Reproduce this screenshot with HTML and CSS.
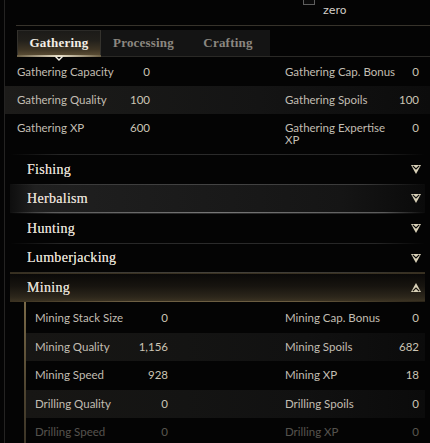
FILE: index.html
```html
<!DOCTYPE html>
<html>
<head>
<meta charset="utf-8">
<link rel="stylesheet" href="styles.css">
</head>
<body>
<div class="panel">
  <div class="top">
    <div class="opt"><span class="check"></span><span class="opt-label">zero</span></div>
  </div>
  <div class="tabs">
    <div class="tab active">Gathering<svg class="tab-caret" width="8" height="5" viewBox="0 0 8 5"><polyline points="0.5,0.5 4,4 7.5,0.5" fill="none" stroke="#f2eee4" stroke-width="1.4"/></svg></div>
    <div class="tab">Processing</div>
    <div class="tab">Crafting</div>
  </div>
  <div class="stats">
    <div class="row">
      <div class="cell"><span class="lbl">Gathering Capacity</span><span class="val">0</span></div>
      <div class="cell"><span class="lbl">Gathering Cap. Bonus</span><span class="val">0</span></div>
    </div>
    <div class="row alt">
      <div class="cell"><span class="lbl">Gathering Quality</span><span class="val">100</span></div>
      <div class="cell"><span class="lbl">Gathering Spoils</span><span class="val">100</span></div>
    </div>
    <div class="row last">
      <div class="cell"><span class="lbl">Gathering XP</span><span class="val">600</span></div>
      <div class="cell"><span class="lbl wrap">Gathering Expertise XP</span><span class="val">0</span></div>
    </div>
  </div>
  <div class="acc">
    <div class="head"><span>Fishing</span><svg class="chev" width="10" height="9" viewBox="0 0 10 9"><polygon points="0,0 10,0 5,9" fill="#d9d1b8"/><polyline points="1.8,0.9 5,4 8.2,0.9" fill="none" stroke="#050505" stroke-width="1.2"/></svg></div>
    <div class="head hl"><span>Herbalism</span><svg class="chev" width="10" height="9" viewBox="0 0 10 9"><polygon points="0,0 10,0 5,9" fill="#d9d1b8"/><polyline points="1.8,0.9 5,4 8.2,0.9" fill="none" stroke="#121212" stroke-width="1.2"/></svg></div>
    <div class="head"><span>Hunting</span><svg class="chev" width="10" height="9" viewBox="0 0 10 9"><polygon points="0,0 10,0 5,9" fill="#d9d1b8"/><polyline points="1.8,0.9 5,4 8.2,0.9" fill="none" stroke="#050505" stroke-width="1.2"/></svg></div>
    <div class="head"><span>Lumberjacking</span><svg class="chev" width="10" height="9" viewBox="0 0 10 9"><polygon points="0,0 10,0 5,9" fill="#d9d1b8"/><polyline points="1.8,0.9 5,4 8.2,0.9" fill="none" stroke="#050505" stroke-width="1.2"/></svg></div>
    <div class="head open"><span>Mining</span><svg class="chev" width="10" height="9" viewBox="0 0 10 9"><polygon points="0,9 10,9 5,0" fill="#d9d1b8"/><polyline points="1.8,8.1 5,5 8.2,8.1" fill="none" stroke="#1a1610" stroke-width="1.2"/></svg></div>
    <div class="body">
      <div class="mrow">
        <div class="cell"><span class="lbl">Mining Stack Size</span><span class="val">0</span></div>
        <div class="cell"><span class="lbl">Mining Cap. Bonus</span><span class="val">0</span></div>
      </div>
      <div class="mrow alt">
        <div class="cell"><span class="lbl">Mining Quality</span><span class="val">1,156</span></div>
        <div class="cell"><span class="lbl">Mining Spoils</span><span class="val">682</span></div>
      </div>
      <div class="mrow">
        <div class="cell"><span class="lbl">Mining Speed</span><span class="val">928</span></div>
        <div class="cell"><span class="lbl">Mining XP</span><span class="val">18</span></div>
      </div>
      <div class="mrow alt">
        <div class="cell"><span class="lbl">Drilling Quality</span><span class="val">0</span></div>
        <div class="cell"><span class="lbl">Drilling Spoils</span><span class="val">0</span></div>
      </div>
      <div class="mrow faded">
        <div class="cell"><span class="lbl">Drilling Speed</span><span class="val">0</span></div>
        <div class="cell"><span class="lbl">Drilling XP</span><span class="val">0</span></div>
      </div>
    </div>
  </div>
</div>
</body>
</html>
```

FILE: styles.css
```css
html, body {
  margin: 0;
  padding: 0;
  background: #040404;
  height: 100%;
  overflow: hidden;
}

.panel {
  margin-left: 4px;
  border-left: 1px solid #242322;
  min-height: 100%;
  font-family: "Lato", "Open Sans", sans-serif;
  color: #c4bfb4;
}

/* top option */
.top {
  height: 25px;
  margin-left: 11px;
  border-bottom: 1px solid #37332b;
}

.opt {
  display: flex;
  flex-direction: column;
  margin-left: 287px;
}

.check {
  display: block;
  width: 10px;
  height: 10px;
  margin-top: -7px;
  border: 1px solid #5e5e5e;
  background: #0a0a0a;
}

.opt-label {
  margin-left: 20px;
  margin-top: -1px;
  font: 11px/13px "DejaVu Sans", sans-serif;
  color: #d4d0c8;
}

/* tabs */
.tabs {
  display: flex;
  margin-top: 4px;
  margin-left: 12px;
  height: 26px;
  border-bottom: 1px solid #2a2926;
}

.tab {
  position: relative;
  width: 85px;
  display: flex;
  align-items: center;
  justify-content: center;
  background: #141414;
  color: #8b8780;
  font: bold 13px "Liberation Serif", serif;
  letter-spacing: 0.2px;
}

.tab:nth-child(3) { width: 84px; }

.tab.active {
  width: 84px;
  color: #f3efe6;
  background: linear-gradient(180deg, #1b1a18 0%, #22201b 40%, #3d3424 75%, #5e5036 100%);
  box-shadow: inset 1px 0 0 #34322d, inset -1px 0 0 #34322d, inset 0 1px 0 #2b2a27;
}

.tab.active::after {
  content: "";
  position: absolute;
  left: 0;
  right: 0;
  bottom: -1px;
  height: 2px;
  background: linear-gradient(to right, #6c5f44, #e8dfc8 50%, #6c5f44);
}

.tab-caret {
  position: absolute;
  left: 38px;
  bottom: -5px;
  z-index: 2;
}

/* stats */
.stats {
  margin-top: 1px;
}

.row {
  display: grid;
  grid-template-columns: 133px 134px;
  column-gap: 135px;
  padding: 8px 0 8px 12px;
  font-size: 11.5px;
  line-height: 12px;
}

.row.alt {
  background: linear-gradient(to right, #1d1c1a 0%, #181817 30%, #141414 60%, #0c0c0c 100%);
}

.row.last {
  padding-bottom: 8px;
}

.cell {
  display: flex;
  justify-content: space-between;
  align-items: flex-start;
}

.lbl {
  color: #c2bdb2;
}

.lbl.wrap {
  max-width: 108px;
}

.val {
  color: #cbc4b4;
  text-align: right;
}

/* accordion */
.acc {
  margin: 0 5px;
}

.head {
  height: 27.5px;
  border-top: 2px solid transparent;
  display: flex;
  align-items: center;
  justify-content: space-between;
  padding: 0 4px 0 17px;
  font: 14px "Liberation Serif", serif;
  color: #e0dbd0;
  letter-spacing: 0.3px;
  text-shadow: 0 0 0.6px #e0dbd0;
  background:
    linear-gradient(to right, transparent, #262626 12%, #2b2b2b 50%, #262626 88%, transparent) top / 100% 1px no-repeat border-box;
}

.head.hl {
  background:
    linear-gradient(to right, transparent, #3a3a3a 15%, #444 50%, #3a3a3a 85%, transparent) top / 100% 1px no-repeat border-box,
    linear-gradient(to right, transparent, #5c5c5c 10%, #777 50%, #5c5c5c 90%, transparent) bottom / 100% 1px no-repeat border-box,
    linear-gradient(to right, #0e0e0e 0%, #202020 6%, #1b1b1b 40%, #151515 80%, #0a0a0a 100%);
  border-bottom: 1px solid transparent;
  height: 26.5px;
}

.head.open {
  background:
    linear-gradient(to right, transparent, #3a3833 15%, #45423b 50%, #3a3833 85%, transparent) top / 100% 1px no-repeat border-box,
    linear-gradient(to right, #3a3120, #6e6044 30%, #6a5c40 70%, #2a2418) bottom / 100% 1px no-repeat border-box,
    linear-gradient(180deg, #0a0908 0%, #17140f 45%, #2c261b 85%, #3a3222 100%);
  border-bottom: 1px solid transparent;
  height: 27px;
}

.head svg {
  display: block;
}

/* mining body */
.body {
  margin-left: 14px;
  border-left: 2px solid #5a4f38;
  border-image: linear-gradient(180deg, #7a6a48, #4e4430 60%, #3a3326) 1;
  padding-top: 2px;
}

.mrow {
  display: grid;
  grid-template-columns: 133px 134px;
  column-gap: 117px;
  height: 28.5px;
  align-items: center;
  padding-left: 9px;
  font-size: 11.5px;
  line-height: 12px;
}

.mrow.alt {
  background: linear-gradient(to right, #171614 0%, #141413 40%, #111 70%, #0b0b0b 100%);
}

.mrow.faded {
  opacity: 0.42;
}
```
